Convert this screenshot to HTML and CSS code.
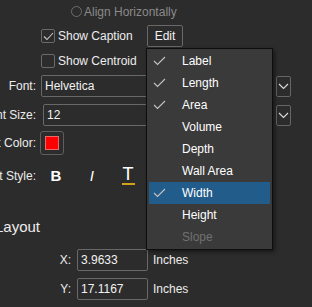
FILE: index.html
```html
<!DOCTYPE html>
<html>
<head>
<meta charset="utf-8">
<link rel="stylesheet" href="styles.css">
</head>
<body>
<div class="panel">
  <div class="row r-align">
    <span class="radio"></span>
    <span class="dim">Align Horizontally</span>
  </div>
  <div class="row r-caption">
    <label class="check-label">
      <span class="box"><svg width="11" height="9" viewBox="0 0 11 9"><path d="M1 4.5 L4 7.5 L10 1" fill="none" stroke="#c8c8c8" stroke-width="1.1"/></svg></span>
      <span>Show Caption</span>
    </label>
    <button class="btn">Edit</button>
  </div>
  <div class="row r-centroid">
    <label class="check-label">
      <span class="box"></span>
      <span>Show Centroid</span>
    </label>
  </div>

  <div class="field r-font">
    <div class="lbl"><span>Font:</span></div>
    <div class="combo">
      <div class="input wide">Helvetica</div>
      <div class="drop"><svg width="11" height="7" viewBox="0 0 11 7"><path d="M1 1 L5.5 5.5 L10 1" fill="none" stroke="#dcdcdc" stroke-width="1.1"/></svg></div>
    </div>
  </div>
  <div class="field r-size">
    <div class="lbl"><span>Font Size:</span></div>
    <div class="combo shift">
      <div class="input wide2">12</div>
      <div class="drop"><svg width="11" height="7" viewBox="0 0 11 7"><path d="M1 1 L5.5 5.5 L10 1" fill="none" stroke="#dcdcdc" stroke-width="1.1"/></svg></div>
    </div>
  </div>
  <div class="field r-color">
    <div class="lbl"><span>Text Color:</span></div>
    <div class="swatch-btn"><span class="swatch"></span></div>
  </div>
  <div class="field r-style">
    <div class="lbl"><span>Text Style:</span></div>
    <div class="styles">
      <span class="sbtn bold">B</span>
      <span class="sbtn ital">I</span>
      <span class="sbtn under"><span class="tglyph">T</span></span>
    </div>
  </div>

  <h3 class="heading">Layout</h3>

  <div class="pos r-x">
    <span class="plbl">X:</span>
    <div class="input num">3.9633</div>
    <span class="unit">Inches</span>
  </div>
  <div class="pos r-y">
    <span class="plbl">Y:</span>
    <div class="input num">17.1167</div>
    <span class="unit">Inches</span>
  </div>
</div>

<div class="menu">
  <div class="item"><span class="ck"><svg width="13" height="10" viewBox="0 0 13 10"><path d="M1 5 L4.5 8.5 L12 1" fill="none" stroke="#c4c4c4" stroke-width="1.1"/></svg></span>Label</div>
  <div class="item"><span class="ck"><svg width="13" height="10" viewBox="0 0 13 10"><path d="M1 5 L4.5 8.5 L12 1" fill="none" stroke="#c4c4c4" stroke-width="1.1"/></svg></span>Length</div>
  <div class="item"><span class="ck"><svg width="13" height="10" viewBox="0 0 13 10"><path d="M1 5 L4.5 8.5 L12 1" fill="none" stroke="#c4c4c4" stroke-width="1.1"/></svg></span>Area</div>
  <div class="item"><span class="ck"></span>Volume</div>
  <div class="item"><span class="ck"></span>Depth</div>
  <div class="item"><span class="ck"></span>Wall Area</div>
  <div class="item sel"><span class="ck"><svg width="13" height="10" viewBox="0 0 13 10"><path d="M1 5 L4.5 8.5 L12 1" fill="none" stroke="#c4c4c4" stroke-width="1.1"/></svg></span>Width</div>
  <div class="item"><span class="ck"></span>Height</div>
  <div class="item disabled"><span class="ck"></span>Slope</div>
</div>
</body>
</html>
```

FILE: styles.css
```css
html, body {
  margin: 0;
  padding: 0;
  background: #2c2c2c;
  width: 312px;
  height: 307px;
  overflow: hidden;
  font-family: "Liberation Sans", Arial, sans-serif;
  font-size: 12px;
  color: #ececec;
}

.panel {
  display: flex;
  flex-direction: column;
}

.row {
  display: flex;
  align-items: center;
}

.r-align { margin-top: 1px; height: 21px; padding-left: 71px; }
.r-caption { margin-top: 3px; height: 22px; padding-left: 41px; }
.r-centroid { margin-top: 3px; height: 21px; padding-left: 41px; }

.radio {
  width: 9px;
  height: 9px;
  border: 1px solid #6e6e6e;
  border-radius: 50%;
  margin-right: 2px;
}

.dim { color: #8a8a8a; }

.check-label {
  display: flex;
  align-items: center;
  width: 106px;
}

.box {
  width: 12px;
  height: 12px;
  border: 1px solid #6a6a6a;
  border-radius: 2px;
  margin-right: 3px;
  display: flex;
  align-items: center;
  justify-content: center;
}

.btn {
  width: 36px;
  height: 22px;
  background: #2c2c2c;
  border: 1px solid #686868;
  border-radius: 2px;
  color: #f2f2f2;
  font-family: "Liberation Sans", Arial, sans-serif;
  font-size: 12px;
  padding: 0;
}

.field {
  display: flex;
  align-items: center;
}

.lbl {
  width: 36px;
  display: flex;
  justify-content: flex-end;
  margin-right: 5px;
  white-space: nowrap;
  flex: none;
}

.r-font { margin-top: 4px; height: 22px; }
.r-size { margin-top: 7px; height: 22px; }
.r-color { margin-top: 5px; height: 24px; }
.r-style { margin-top: 8px; height: 25px; }

.combo {
  display: flex;
  align-items: center;
  gap: 4px;
}
.combo.shift { margin-left: 2px; }

.input {
  box-sizing: border-box;
  height: 22px;
  border: 1px solid #686868;
  border-radius: 2px;
  display: flex;
  align-items: center;
  padding-left: 3px;
  color: #f2f2f2;
}

.wide { width: 231px; }
.wide2 { width: 229px; }

.drop {
  box-sizing: border-box;
  width: 15px;
  height: 21px;
  border: 1px solid #666;
  border-radius: 2px;
  display: flex;
  align-items: center;
  justify-content: center;
}

.swatch-btn {
  box-sizing: border-box;
  width: 24px;
  height: 24px;
  border: 1px solid #5e5e5e;
  border-radius: 3px;
  margin-left: -1px;
  display: flex;
  align-items: center;
  justify-content: center;
}

.swatch {
  box-sizing: border-box;
  width: 14px;
  height: 14px;
  background: #ff0000;
  border: 1px solid #e86a6a;
}

.styles {
  display: flex;
  gap: 12px;
  margin-left: 3px;
}

.sbtn {
  width: 24px;
  height: 24px;
  display: flex;
  align-items: center;
  justify-content: center;
  color: #ffffff;
}

.bold { font-weight: bold; font-size: 15px; }
.ital { font-style: italic; font-size: 14px; font-family: "DejaVu Sans", sans-serif; font-weight: 300; }
.under {
  flex-direction: column;
}
.tglyph {
  font-size: 18px;
  line-height: 15px;
  font-family: "Liberation Sans", Arial, sans-serif;
  font-weight: normal;
  border-bottom: 2px solid #d4a21a;
  padding: 0 1px 1px 1px;
  margin-top: 1px;
}

.heading {
  margin: 29px 0 0 -5px;
  height: 20px;
  line-height: 20px;
  font-size: 15px;
  font-weight: normal;
  color: #ececec;
}

.pos {
  display: flex;
  align-items: center;
  height: 22px;
}
.r-x { margin-top: 12px; }
.r-y { margin-top: 7px; }

.plbl {
  width: 71px;
  text-align: right;
  margin-right: 6px;
}

.num { width: 71px; padding-left: 3px; }

.unit { margin-left: 5px; }

.menu {
  position: absolute;
  left: 146px;
  top: 48px;
  width: 125px;
  box-sizing: content-box;
  background: #3a3a3a;
  border: 1px solid #0e0e0e;
  padding: 1px 0 1px 0;
  box-shadow: 2px 2px 4px rgba(0, 0, 0, 0.45);
}

.item {
  height: 22px;
  margin: 0 2px;
  display: flex;
  align-items: center;
  color: #ffffff;
}

.ck {
  width: 33px;
  padding-left: 4px;
  box-sizing: border-box;
  display: flex;
  align-items: center;
}

.item.sel { background: #215c8b; }
.item.disabled { color: #717171; }
```
